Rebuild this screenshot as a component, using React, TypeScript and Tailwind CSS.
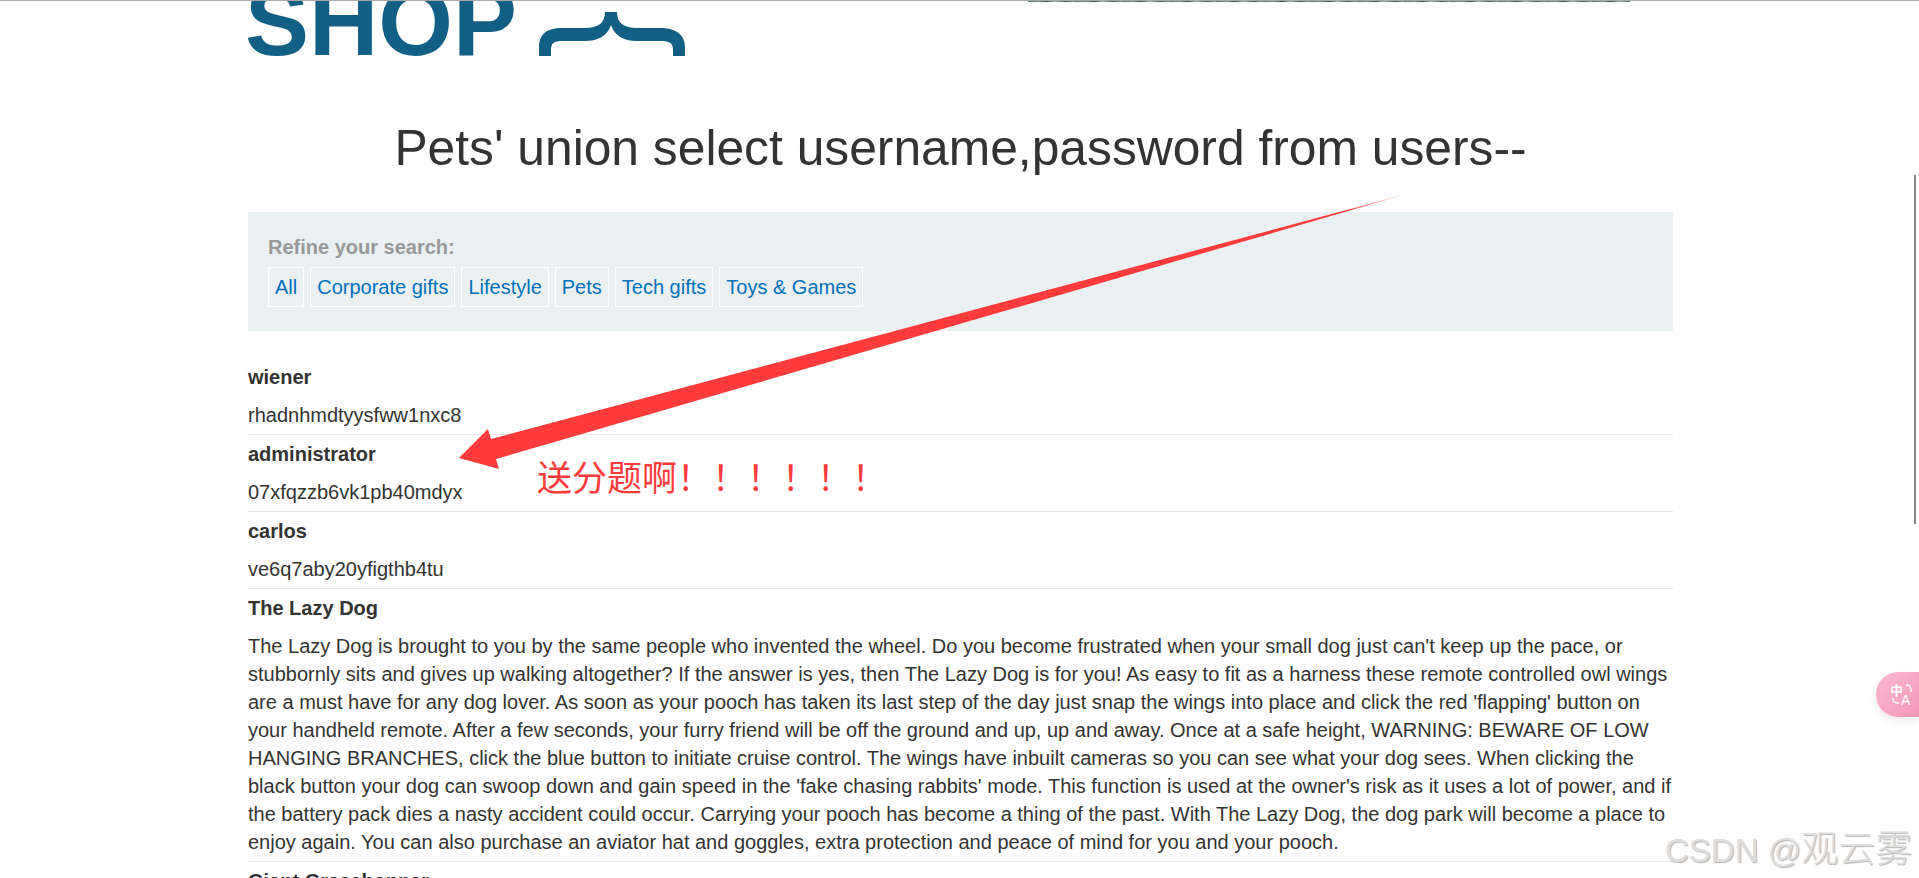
const filters = ["All", "Corporate gifts", "Lifestyle", "Pets", "Tech gifts", "Toys & Games"];

const users = [
  { name: "wiener", password: "rhadnhmdtyysfww1nxc8" },
  { name: "administrator", password: "07xfqzzb6vk1pb40mdyx" },
  { name: "carlos", password: "ve6q7aby20yfigthb4tu" },
];

const lazyDog =
  "The Lazy Dog is brought to you by the same people who invented the wheel. Do you become frustrated when your small dog just can't keep up the pace, or stubbornly sits and gives up walking altogether? If the answer is yes, then The Lazy Dog is for you! As easy to fit as a harness these remote controlled owl wings are a must have for any dog lover. As soon as your pooch has taken its last step of the day just snap the wings into place and click the red 'flapping' button on your handheld remote. After a few seconds, your furry friend will be off the ground and up, up and away. Once at a safe height, WARNING: BEWARE OF LOW HANGING BRANCHES, click the blue button to initiate cruise control. The wings have inbuilt cameras so you can see what your dog sees. When clicking the black button your dog can swoop down and gain speed in the 'fake chasing rabbits' mode. This function is used at the owner's risk as it uses a lot of power, and if the battery pack dies a nasty accident could occur. Carrying your pooch has become a thing of the past. With The Lazy Dog, the dog park will become a place to enjoy again. You can also purchase an aviator hat and goggles, extra protection and peace of mind for you and your pooch.";

export default function App() {
  return (
    <div className="relative h-[878px] w-full overflow-hidden bg-white font-['Liberation_Sans',Arial,sans-serif] text-[20px] text-[#333332]">
      {/* Top edge */}
      <div className="h-px bg-[#aaaaaa]" />
      <div className="ml-[1028px] h-px w-[602px] bg-[repeating-linear-gradient(90deg,#4d6f66_0px,#6f8f86_11px,#2f4a45_19px,#9db3ab_27px,#3d5c55_38px,#7e9a92_47px)]" />

      <div className="ml-[248px] h-[877px] w-[1425px]">
        {/* Logo */}
        <header className="-mt-px flex h-[56px] items-start overflow-hidden">
          <span className="-mt-[27px] -ml-[3px] text-[96px] leading-none font-bold text-[#115f85]">SHOP</span>
          <svg className="ml-[22px] shrink-0" width="146" height="56" viewBox="539 0 146 56" fill="#115f85">
            <path d="M539 55V46C539 34 546 27 562 27H585C598 27 605 22 605 11H617C617 22 624 27 637 27H660C676 27 685 34 685 46V55H673V49C673 42 670 40 660 40H637C625 40 615 36 611 24C607 36 597 40 585 40H562C554 40 551 42 551 49V55Z" />
          </svg>
        </header>

        <h1 className="mt-[60px] text-center text-[49.75px] leading-[62px] font-normal">
          Pets' union select username,password from users--
        </h1>

        {/* Filters */}
        <section className="mt-[33px] h-[119px] bg-[#ebf0f2] px-5 pt-[23px]">
          <p className="leading-[24px] font-bold text-[#999999]">Refine your search:</p>
          <div className="mt-[8px] flex gap-[6px]">
            {filters.map((f) => (
              <a key={f} className="flex h-10 items-center border border-white px-[6px] text-[#0071bc]">
                {f}
              </a>
            ))}
          </div>
        </section>

        {/* Results */}
        <div className="mt-[27px]">
          {users.map((u) => (
            <div key={u.name} className="flex h-[77px] flex-col border-b border-[#e6e6e6] pt-[5px]">
              <div className="h-[38px] leading-[29px] font-bold">{u.name}</div>
              <div className="leading-[29px]">{u.password}</div>
            </div>
          ))}
          <div className="border-b border-[#e6e6e6] pt-[5px] pb-[5px]">
            <div className="h-[38px] leading-[29px] font-bold">The Lazy Dog</div>
            <p className="leading-[28px]">{lazyDog}</p>
          </div>
          <div className="pt-[5px] leading-[29px] font-bold">Giant Grasshopper</div>
        </div>
      </div>

      {/* Screenshot annotation */}
      <svg className="pointer-events-none absolute inset-0" width="1919" height="878" viewBox="0 0 1919 878">
        <defs>
          <linearGradient id="arrow-fade" gradientUnits="userSpaceOnUse" x1="1410" y1="193" x2="1345" y2="212">
            <stop offset="0" stopColor="#ff3b3b" stopOpacity="0.1" />
            <stop offset="1" stopColor="#ff3b3b" />
          </linearGradient>
        </defs>
        <polygon points="1410,193 491,439 488,429 459,458 499,469 496,459" fill="url(#arrow-fade)" />
      </svg>
      <div className="absolute top-[454px] left-[537px] font-['Noto_Sans_CJK_SC',sans-serif] text-[35px] leading-[44px] font-normal whitespace-nowrap text-[#ff3b3b]">
        送分题啊！！！！！！
      </div>

      {/* Scrollbar thumb */}
      <div className="absolute top-[175px] left-[1914px] h-[349px] w-[2px] bg-[#8a8a8a]" />

      {/* Translate widget */}
      <div className="absolute top-[672px] right-0 flex h-[45px] w-[43px] items-center rounded-l-[22px] bg-gradient-to-br from-[#fdb8d2] to-[#f297b8] pl-[15px] shadow-[0_4px_10px_rgba(0,0,0,0.08)]">
        <svg width="22" height="22" viewBox="0 0 22 22" fill="none" stroke="#ffffff" strokeWidth="1.4">
          <text x="-1" y="11" fontSize="13" fontWeight="700" fill="#ffffff" stroke="none" fontFamily="Noto Sans CJK SC">中</text>
          <text x="10" y="21" fontSize="14" fill="#ffffff" stroke="none" fontFamily="Liberation Sans">A</text>
          <path d="M15 1h1a4 4 0 0 1 4 4v3" />
          <path d="M2 14v1a4 4 0 0 0 4 4h2" />
        </svg>
      </div>

      {/* Watermark */}
      <div className="absolute top-[824px] left-[1665px] flex items-baseline text-[33px] leading-[44px] whitespace-nowrap text-[#dddddd] [text-shadow:1px_1px_1px_rgba(0,0,0,0.3)]">
        <span className="whitespace-pre">CSDN @</span>
        <span className="font-['Noto_Sans_CJK_SC',sans-serif] text-[37px] font-light">观云雾</span>
      </div>
    </div>
  );
}
